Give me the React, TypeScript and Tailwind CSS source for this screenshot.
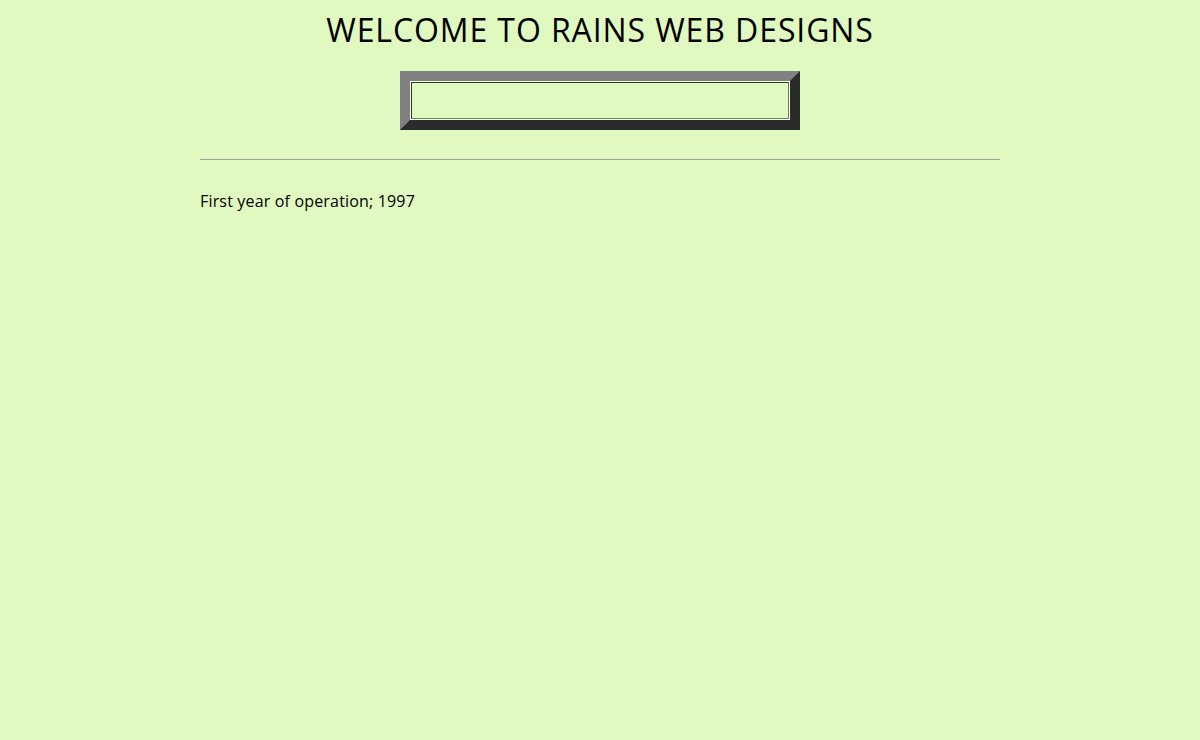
import React from 'react'

const App = () => {
  return (
    <div
      className="min-h-[740px] w-full bg-[#e0f9c1] text-black"
      style={{ fontFamily: '"Open Sans", "Noto Sans", sans-serif' }}
    >
      <div className="mx-auto w-[800px] pt-[9px]">
        <h1 className="text-center text-[32px] leading-[42px] tracking-[0.9px]">
          WELCOME TO RAINS WEB DESIGNS
        </h1>

        {/* bevelled box */}
        <div className="mt-[20px] flex justify-center">
          <div className="h-[59px] w-[400px] border-[10px] border-t-[#808080] border-l-[#808080] border-b-[#2b2b2b] border-r-[#2b2b2b]">
            <div className="h-full w-full border border-[#f4ffe8]">
              <div className="h-full w-full border border-t-[#2a3a1c] border-l-[#2a3a1c] border-b-[#6e7d5e] border-r-[#6e7d5e]" />
            </div>
          </div>
        </div>

        <hr className="mt-[29px] border-t border-[#a0a0a0]" />

        <p className="mt-[29px] text-[16px] leading-[24px] tracking-[0.17px]">First year of operation; 1997</p>
      </div>
    </div>
  )
}

export default App
